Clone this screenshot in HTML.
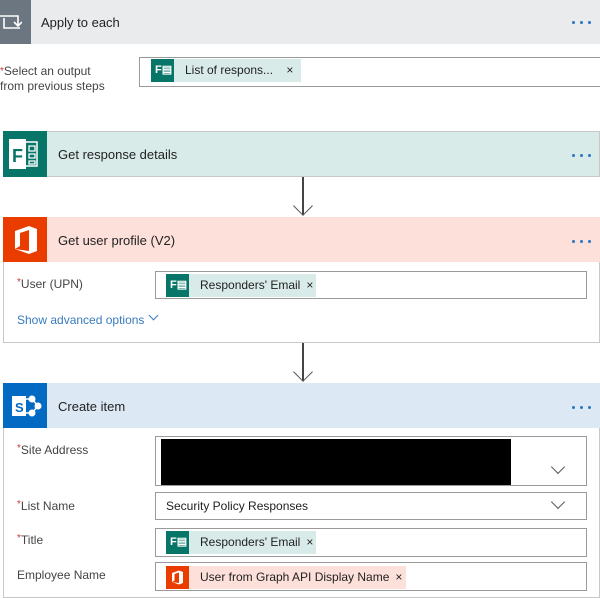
<!DOCTYPE html>
<html><head><style>
*{box-sizing:border-box;margin:0;padding:0}
body{width:600px;height:593px;background:#fff;position:relative;overflow:hidden;font-family:"Liberation Sans",sans-serif;color:#222}
.a{position:absolute}
.hdr{position:absolute;font-size:13px;color:#222}
.dots{position:absolute;right:8px;width:20px;height:4px}
.dots i{position:absolute;top:0;width:3px;height:3px;border-radius:50%;background:#2a74c4}
.box{position:absolute;border:1px solid #9a9a9a;background:#fff}
.lbl{position:absolute;font-size:12px;color:#444}
.lbl b{color:#d13438;font-weight:normal;font-size:10px;vertical-align:top}
.tok{position:absolute;height:23px;font-size:12px;color:#222;line-height:23px}
.ti{position:absolute;left:0;top:0;width:23px;height:23px}
.x{font-size:12px;margin-left:6px}
.arrow{position:absolute;width:2px;background:#444}
.chev{position:absolute;width:10px;height:10px;border-right:1.5px solid #555;border-bottom:1.5px solid #555;transform:rotate(45deg)}
</style></head><body>
<!-- apply to each -->
<div class="a" style="left:0;top:0;width:600px;height:44px;background:#e9ebed"></div>
<div class="a" style="left:0;top:0;width:31px;height:44px;background:#6b7681"></div>
<svg class="a" style="left:0;top:12px" width="22" height="20" viewBox="0 0 22 20"><path d="M0 4H18V14M14 10l4 4 4-4M20 16H4V6" fill="none" stroke="#fff" stroke-width="1.6"/></svg>
<div class="hdr" style="left:41px;top:15px">Apply to each</div>
<div class="dots" style="top:21px"><i style="left:0"></i><i style="left:8px"></i><i style="left:16px"></i></div>
<div class="lbl" style="left:0;top:64px;line-height:15px"><b>*</b>Select an output<br>from previous steps</div>
<div class="box" style="left:139px;top:57px;width:462px;height:30px"></div>
<div class="tok" style="left:151px;top:59px;width:150px;background:#d9ebe9;padding-left:34px">List of respons... <span class="x" style="margin-left:10px">×</span></div>
<div class="ti" style="left:151px;top:59px;background:#077568"></div>
<div class="a" style="left:155px;top:63px;color:#fff;font-size:11px;font-weight:bold">F▤</div>

<!-- get response details -->
<div class="a" style="left:3px;top:131px;width:597px;height:46px;background:#d9ebe9;border:1px solid #c8c8c8"></div>
<div class="a" style="left:3px;top:131px;width:44px;height:46px;background:#077568"></div>
<svg class="a" style="left:9px;top:139px" width="34" height="30" viewBox="0 0 34 30"><rect x="2" y="3" width="26" height="24" fill="none" stroke="#fff" stroke-width="1.5"/><rect x="0" y="0" width="17" height="30" fill="#fff"/><text x="3" y="23" font-size="18" font-weight="bold" fill="#077568" font-family="Liberation Sans">F</text><path d="M20 7h6v5h-6zM20 15h6v4h-6zM20 22h6v3h-6z" fill="none" stroke="#fff" stroke-width="1.3"/></svg>
<div class="hdr" style="left:58px;top:147px">Get response details</div>
<div class="dots" style="top:154px"><i style="left:0"></i><i style="left:8px"></i><i style="left:16px"></i></div>
<div class="arrow" style="left:302px;top:177px;height:38px"></div>
<div class="chev" style="left:296px;top:199px;width:14px;height:14px"></div>

<!-- get user profile -->
<div class="a" style="left:3px;top:217px;width:597px;height:126px;border:1px solid #c8c8c8"></div>
<div class="a" style="left:3px;top:217px;width:597px;height:45px;background:#fde0d9"></div>
<div class="a" style="left:3px;top:217px;width:44px;height:45px;background:#eb3c00"></div>
<svg class="a" style="left:13px;top:226px" width="26" height="28" viewBox="0 0 26 28"><path d="M2 5L16 0l8 3v22l-8 3L2 23l14 2V4L7 7v13l-5 3z" fill="#fff"/></svg>
<div class="hdr" style="left:58px;top:233px">Get user profile (V2)</div>
<div class="dots" style="top:240px"><i style="left:0"></i><i style="left:8px"></i><i style="left:16px"></i></div>
<div class="lbl" style="left:17px;top:277px"><b>*</b>User (UPN)</div>
<div class="box" style="left:155px;top:271px;width:432px;height:28px"></div>
<div class="tok" style="left:166px;top:274px;width:150px;background:#d9ebe9;padding-left:34px">Responders' Email<span class="x">×</span></div>
<div class="ti" style="left:166px;top:274px;background:#077568"></div>
<div class="a" style="left:170px;top:278px;color:#fff;font-size:11px;font-weight:bold">F▤</div>
<div class="a" style="left:17px;top:313px;font-size:12px;color:#3a7bbf">Show advanced options</div>
<div class="chev" style="left:150px;top:312px;width:7px;height:7px;border-color:#3a7bbf;border-width:1px"></div>
<div class="arrow" style="left:302px;top:343px;height:38px"></div>
<div class="chev" style="left:296px;top:365px;width:14px;height:14px"></div>

<!-- create item -->
<div class="a" style="left:3px;top:383px;width:597px;height:215px;border:1px solid #c8c8c8"></div>
<div class="a" style="left:3px;top:383px;width:597px;height:45px;background:#dce8f4"></div>
<div class="a" style="left:3px;top:383px;width:44px;height:45px;background:#036ac4"></div>
<svg class="a" style="left:10px;top:393px" width="32" height="26" viewBox="0 0 32 26"><circle cx="22" cy="6" r="3.5" fill="#fff"/><circle cx="28" cy="13" r="3.5" fill="#fff"/><circle cx="22" cy="20" r="3.5" fill="#fff"/><path d="M14 6h8l6 7-6 7h-8" fill="none" stroke="#fff" stroke-width="1.5"/><rect x="2" y="3" width="14" height="20" fill="#fff"/><text x="5" y="19" font-size="13" font-weight="bold" fill="#036ac4" font-family="Liberation Sans">S</text></svg>
<div class="hdr" style="left:58px;top:399px">Create item</div>
<div class="dots" style="top:406px"><i style="left:0"></i><i style="left:8px"></i><i style="left:16px"></i></div>

<div class="lbl" style="left:17px;top:443px"><b>*</b>Site Address</div>
<div class="box" style="left:155px;top:436px;width:432px;height:50px"></div>
<div class="a" style="left:161px;top:439px;width:350px;height:46px;background:#000"></div>
<div class="chev" style="left:553px;top:462px"></div>

<div class="lbl" style="left:17px;top:499px"><b>*</b>List Name</div>
<div class="box" style="left:155px;top:492px;width:432px;height:28px"></div>
<div class="a" style="left:166px;top:499px;font-size:12px">Security Policy Responses</div>
<div class="chev" style="left:553px;top:497px"></div>

<div class="lbl" style="left:17px;top:533px"><b>*</b>Title</div>
<div class="box" style="left:155px;top:528px;width:432px;height:29px"></div>
<div class="tok" style="left:166px;top:531px;width:150px;background:#d9ebe9;padding-left:34px">Responders' Email<span class="x">×</span></div>
<div class="ti" style="left:166px;top:531px;background:#077568"></div>
<div class="a" style="left:170px;top:535px;color:#fff;font-size:11px;font-weight:bold">F▤</div>

<div class="lbl" style="left:17px;top:568px">Employee Name</div>
<div class="box" style="left:155px;top:562px;width:432px;height:29px"></div>
<div class="tok" style="left:166px;top:566px;width:240px;background:#fde0d9;padding-left:34px">User from Graph API Display Name<span class="x">×</span></div>
<div class="ti" style="left:166px;top:566px;background:#eb3c00"></div>
<svg class="a" style="left:171px;top:570px" width="13" height="15" viewBox="0 0 26 28"><path d="M2 5L16 0l8 3v22l-8 3L2 23l14 2V4L7 7v13l-5 3z" fill="#fff"/></svg>
</body></html>
